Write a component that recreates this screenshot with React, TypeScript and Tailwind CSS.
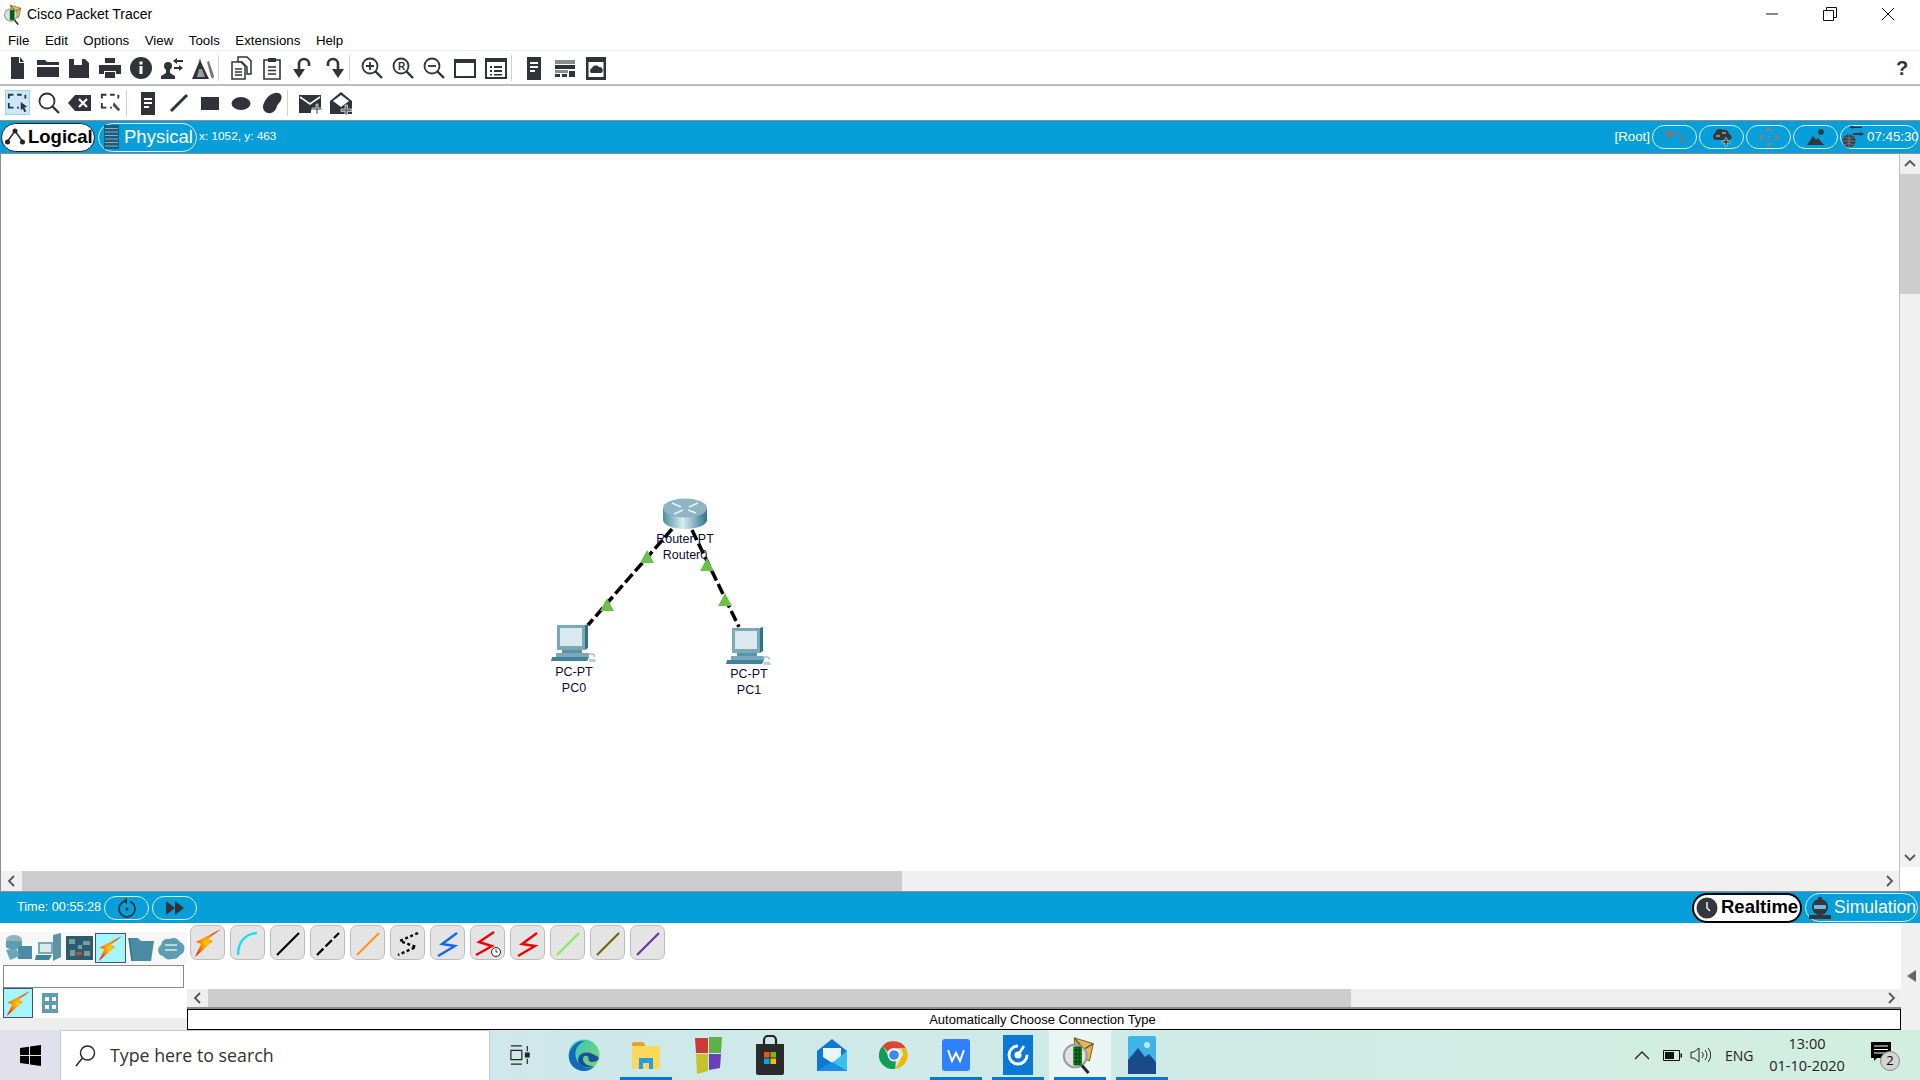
import type { ReactNode } from "react"

const ink = "#30333a"

function Tool({ children, selected }: { children: ReactNode; selected?: boolean }) {
  return (
    <div className="flex h-full w-[31px] items-center justify-center">
      <div className={`flex h-[25px] w-[25px] items-center justify-center ${selected ? "bg-[#cce8ff] border border-[#99d1ff]" : ""}`}>
        {children}
      </div>
    </div>
  )
}

function Ico({ children, size = 24 }: { children: ReactNode; size?: number }) {
  return (
    <svg width={size} height={size} viewBox="0 0 24 24" fill={ink} stroke="none">
      {children}
    </svg>
  )
}

function Sep({ w }: { w: string }) {
  return (
    <div className={`flex h-full items-center justify-start ${w}`}>
      <div className="h-[26px] w-px bg-[#d0d0d0]" />
    </div>
  )
}

function Magnifier({ children }: { children?: ReactNode }) {
  return (
    <Ico>
      <circle cx="10" cy="10" r="7.5" fill="none" stroke={ink} strokeWidth="1.8" />
      <path d="M15.5 15.5 22 22" stroke={ink} strokeWidth="2.4" />
      {children}
    </Ico>
  )
}

function TopToolbar() {
  return (
    <div className="flex h-[34px] items-center border-t border-[#eeeeee] pl-[1px]">
      <Tool><Ico><path d="M6 1h8v6h5v16H6z" /><path d="M15 1l4 5h-4z" /></Ico></Tool>
      <Tool><Ico><path d="M1 4h8l2 2h12v3H1z" /><path d="M1 11h22v10H1z" /></Ico></Tool>
      <Tool><Ico><path d="M2 3h16l4 4v15H2z" /><path d="M7 3h8v6H7z" fill="#fff" /></Ico></Tool>
      <Tool><Ico><path d="M7 2h10v5H7z" /><path d="M1 9h22v9h-5v-3H6v3H1z" /><path d="M7 16h10v6H7z" /></Ico></Tool>
      <Tool><Ico><circle cx="12" cy="12" r="11" /><path d="M10.5 10h3v8h-3zM10.5 5.5h3v3h-3z" fill="#fff" /></Ico></Tool>
      <Tool><Ico><circle cx="8" cy="10" r="4" /><path d="M6 13h4v4l5 3v3H1v-3l5-3z" /><path d="M13 5l4-3v2h6v2h-6v2zM23 12l-4-3v2h-5v2h5v2z" /></Ico></Tool>
      <Tool><Ico><path d="M9 2l1 4 8 17H1L8 6z" /><path d="M8 13h3l3 8H6z" fill="#9a9ca0" /><path d="M16 6l2-1 5 15-1 3-2-2z" fill="#777" /></Ico></Tool>
      <Sep w="w-[7px]" />
      <Tool><Ico><path d="M9 1h9l4 4v13h-4v-7l-5-5H9z" fill="none" stroke={ink} strokeWidth="1.5" /><path d="M3 6h9l4 4v13H3z" fill="#fff" stroke={ink} strokeWidth="1.5" /><path d="M6 13h7M6 16h7M6 19h7" stroke={ink} strokeWidth="1.3" /></Ico></Tool>
      <Tool><Ico><path d="M4 4h16v19H4z" fill="#fff" stroke={ink} strokeWidth="1.6" /><path d="M8 2h8v4H8z" /><path d="M8 11h8M8 14.5h8M8 18h8" stroke={ink} strokeWidth="1.4" /></Ico></Tool>
      <Tool><Ico><path d="M8 14V8a5 5 0 0 1 10 0v2" fill="none" stroke={ink} strokeWidth="2.6" /><path d="M2 13h12l-6 9z" /></Ico></Tool>
      <Tool><Ico><path d="M16 14V8a5 5 0 0 0-10 0v2" fill="none" stroke={ink} strokeWidth="2.6" /><path d="M10 13h12l-6 9z" /></Ico></Tool>
      <Sep w="w-[7px]" />
      <Tool><Magnifier><path d="M6 10h8M10 6v8" stroke={ink} strokeWidth="1.8" /></Magnifier></Tool>
      <Tool><Magnifier><text x="7" y="13.5" fontSize="10" fontWeight="700" fontFamily="Liberation Sans" fill={ink}>R</text></Magnifier></Tool>
      <Tool><Magnifier><path d="M6 10h8" stroke={ink} strokeWidth="1.8" /></Magnifier></Tool>
      <Tool><Ico><path d="M2 4h20v17H2z" fill="none" stroke={ink} strokeWidth="2" /><path d="M2 4h20v3H2z" /></Ico></Tool>
      <Tool><Ico><path d="M2 3h20v19H2z" fill="none" stroke={ink} strokeWidth="2" /><path d="M2 3h20v3H2z" /><path d="M6 10h2v2H6zM6 14h2v2H6zM10 10h8v2h-8zM10 14h8v2h-8zM6 18h2v1.5H6zM10 18h8v1.5h-8z" /></Ico></Tool>
      <Sep w="w-[7px]" />
      <Tool><Ico><path d="M5 1h14v23H5z" /><path d="M8 6h8v2H8zM8 10h8v2H8zM8 14h5v2H8z" fill="#fff" /></Ico></Tool>
      <Tool><Ico><path d="M2 4h20v4H2z" fill="#8a8d90" /><path d="M2 9h20v4H2z" fill={ink} /><path d="M2 14h13v3H2z" fill="#8a8d90" /><path d="M2 18h5v3H2zM9 18h5v3H9zM16 15h6v6h-6z" fill={ink} /></Ico></Tool>
      <Tool><Ico><path d="M2 1h20v23H2z" /><path d="M4.5 6h15v15h-15z" fill="#fff" /><path d="M7 17a3 3 0 0 1 1-5 4 4 0 0 1 7-1 3.2 3.2 0 0 1 2 6z" /></Ico></Tool>
      <div className="flex-1" />
      <div className="mr-[8px] flex w-[20px] items-center justify-center font-['Liberation_Sans',sans-serif] text-[20px] font-bold text-[#30333a]">?</div>
    </div>
  )
}

function LowerToolbar() {
  return (
    <div className="flex h-[36px] items-center border-t-2 border-[#bdbdbd] pb-[1px] pl-[2px]">
      <Tool selected><Ico size={22}><path d="M2 7V3h5M11 3h5M20 3v4M2 12v5h5M11 17h2" fill="none" stroke={ink} strokeWidth="2" /><path d="M15 11l7 5-3 1 2 4-2 1-2-4-2 2z" /></Ico></Tool>
      <Tool><Magnifier /></Tool>
      <Tool><Ico><path d="M7 4h16v16H7l-7-8z" /><path d="M11 8l8 8M19 8l-8 8" stroke="#fff" strokeWidth="2.2" /></Ico></Tool>
      <Tool><Ico size={22}><path d="M2 7V3h5M11 3h5M20 3v4M2 12v5h5M11 17h2" fill="none" stroke={ink} strokeWidth="2" /><path d="M15 11l7 8-2 2-6-6z" fill="#4d5056" /></Ico></Tool>
      <Sep w="w-[6px]" />
      <Tool><Ico><path d="M5 1h14v23H5z" /><path d="M8 7h8v2H8zM8 11h8v2H8zM8 15h5v2H8z" fill="#fff" /></Ico></Tool>
      <Tool><Ico><path d="M4 20 20 4" stroke={ink} strokeWidth="3" /></Ico></Tool>
      <Tool><Ico><path d="M3 6h18v13H3z" /></Ico></Tool>
      <Tool><Ico><ellipse cx="12" cy="12.5" rx="9.5" ry="6.5" /></Ico></Tool>
      <Tool><Ico><path d="M15 2c5-1 8 3 6 7-1 3-3 3-4 6-1 4-4 8-9 7-5-1-6-6-4-10 2-5 6-9 11-10z" /></Ico></Tool>
      <Sep w="w-[7px]" />
      <Tool><Ico><path d="M1 4h22v15H13v3H1z" /><path d="M2 6l10 7 10-7" fill="none" stroke="#fff" strokeWidth="1.6" /><path d="M18 13h2v4h4v2h-4v4h-2v-4h-4v-2h4z" fill="#6f7276" stroke="#fff" strokeWidth="0.6" /></Ico></Tool>
      <Tool><Ico><path d="M1 10 12 1l11 9v13H1z" /><path d="M4 10l8-6 8 6-8 6z" fill="#fff" /><path d="M16 14h2.500v4H23v2.500h-4.500V24H16v-3.500h-4V18h4z" fill="#6f7276" stroke="#fff" strokeWidth="0.6" /></Ico></Tool>
    </div>
  )
}

function Pill({ children, className = "" }: { children?: ReactNode; className?: string }) {
  return (
    <div className={`flex h-[24px] w-[45px] items-center justify-center rounded-full border border-[#d8f0fa] ${className}`}>
      {children}
    </div>
  )
}

function TopBlueBar() {
  return (
    <div className="flex h-[33px] items-center border-t border-[#8d8d8d] bg-[#069fd9] font-['Liberation_Sans',sans-serif] text-white">
      <div className="ml-px flex h-[29px] w-[94px] items-center gap-[2px] rounded-full border border-[#1d1d1d] bg-white pl-[2px] text-[18.5px] font-bold text-black">
        <svg width="22" height="22" viewBox="0 0 22 22">
          <path d="M3 16 11 5l8 11" fill="none" stroke="#222" strokeWidth="1.4" />
          <circle cx="3.500" cy="16" r="2.500" fill="#222" />
          <circle cx="11" cy="5" r="2.500" fill="#222" />
          <circle cx="18.500" cy="16" r="2.500" fill="#222" />
        </svg>
        <span className="leading-none">Logical</span>
      </div>
      <div className="ml-[3px] flex h-[29px] w-[99px] items-center gap-[5px] rounded-full border border-[#d8f0fa] pl-[5px] text-[18.5px]">
        <svg width="15" height="24" viewBox="0 0 15 24">
          <path d="M0 0h15v24H0z" fill="#1f5a78" />
          <path d="M1 3.500h13M1 7h13M1 10.500h13M1 14h13M1 17.500h13M1 21h13" stroke="#7fb0c8" strokeWidth="1" />
        </svg>
        <span className="leading-none">Physical</span>
      </div>
      <span className="ml-[2px] text-[11.8px]">x: 1052, y: 463</span>
      <div className="flex-1" />
      <span className="mr-[2px] text-[13.3px]">[Root]</span>
      <div className="mr-[2px] flex gap-[2px]">
        <Pill>
          <svg width="22" height="16" viewBox="0 0 22 16"><path d="M5 5h9a5 5 0 0 1 5 5v5" fill="none" stroke="#77797c" strokeWidth="2.200" /><path d="M0 5l7-5v10z" fill="#77797c" /></svg>
        </Pill>
        <Pill>
          <svg width="22" height="20" viewBox="0 0 22 20"><path d="M4 13a4 4 0 0 1 0-7 5 5 0 0 1 8-3 4.500 4.500 0 0 1 6 4 3 3 0 0 1-1 6z" fill="#33363b" /><path d="M5 8h4v2H5zM11 5h4v2h-4z" fill="#8a8d90" /><path d="M14 11h2v3h3v2h-3v3h-2v-3h-3v-2h3z" fill="#33363b" stroke="#fff" strokeWidth="0.5" /></svg>
        </Pill>
        <Pill>
          <svg width="22" height="22" viewBox="0 0 22 22" fill="#6f8694"><path d="M11 0l4 5H7zM11 22l-4-5h8zM0 11l5-4v8zM22 11l-5 4V7z" /><circle cx="11" cy="11" r="1.500" /></svg>
        </Pill>
        <Pill>
          <svg width="20" height="18" viewBox="0 0 20 18" fill="#33363b"><circle cx="15" cy="4" r="2.800" /><path d="M1 17l6-9 3 4 2-2 6 7z" /></svg>
        </Pill>
        <Pill className="!w-[78px] justify-start gap-[2px]">
          <svg width="24" height="24" viewBox="0 0 24 24" className="shrink-0">
            <circle cx="8" cy="16" r="6.500" fill="#3a4046" />
            <path d="M2 16h12M8 10v12M4 12c3 2 5 2 8 0M4 20c3-2 5-2 8 0" stroke="#7f8a90" strokeWidth="0.800" fill="none" />
            <path d="M8 2l4-1.500V1.500h9v1.500h-9v1zM23 9l-4-2v1h-7v2h7v1z" fill="#30333a" />
          </svg>
          <span className="text-[13.3px]">07:45:30</span>
        </Pill>
      </div>
    </div>
  )
}

function RouterIcon() {
  return (
    <svg width="46" height="32" viewBox="0 0 46 32">
      <defs>
        <linearGradient id="rside" x1="0" x2="1" y1="0" y2="0">
          <stop offset="0" stopColor="#4f8aa0" />
          <stop offset="0.45" stopColor="#d6ecf2" />
          <stop offset="1" stopColor="#2f7389" />
        </linearGradient>
      </defs>
      <path d="M1 10v12c0 5 10 9 22 9s22-4 22-9V10z" fill="url(#rside)" />
      <ellipse cx="23" cy="10" rx="22" ry="9.500" fill="#8fb5c4" />
      <path d="M10 5l9 4M36 5l-9 4M12 16l9-4M34 15l-8-3" stroke="#e8f3f6" strokeWidth="1.800" />
    </svg>
  )
}

function PcIcon() {
  return (
    <svg width="46" height="42" viewBox="0 0 46 42">
      <path d="M6 1h28v25H6z" fill="#7aa8b9" />
      <path d="M34 1l3-1v24l-3 2z" fill="#2f7389" />
      <path d="M9 4h22v18H9z" fill="#d9e9ef" />
      <path d="M11 26h20v3H11z" fill="#5c93a7" />
      <path d="M5 29h33v4H5z" fill="#7aa8b9" />
      <path d="M1 33h37l-2 4H0z" fill="#3f8299" />
      <path d="M37 31c4-2 7-1 6 2" fill="none" stroke="#9ab9c5" strokeWidth="1.200" />
      <path d="M37 35h7l1 3h-7z" fill="#b7cfd8" />
    </svg>
  )
}

function NodeLabel({ type, name }: { type: string; name: string }) {
  return (
    <div className="text-center font-['Liberation_Sans',sans-serif] text-[12.5px] leading-[16px] text-[#0a0a3c]">
      <div>{type}</div>
      <div>{name}</div>
    </div>
  )
}

function Canvas() {
  return (
    <div className="relative flex-1 bg-white">
      <svg className="absolute left-0 top-0" width="900" height="560">
        <path d="M671 375 587 471" stroke="#000" strokeWidth="3.500" strokeDasharray="11 4" />
        <path d="M691 376 738 473" stroke="#000" strokeWidth="3.500" strokeDasharray="11 4" />
        <path d="M646 396l7 13h-14z M606 444l7 13h-14z M706 404l7 13h-14z M724 439l7 13h-14z" fill="#6cc04a" />
      </svg>
      <div className="absolute left-[661px] top-[344px]"><RouterIcon /></div>
      <div className="absolute left-[644px] top-[377px] w-[80px]"><NodeLabel type="Router-PT" name="Router0" /></div>
      <div className="absolute left-[550px] top-[470px]"><PcIcon /></div>
      <div className="absolute left-[533px] top-[510px] w-[80px]"><NodeLabel type="PC-PT" name="PC0" /></div>
      <div className="absolute left-[725px] top-[473px]"><PcIcon /></div>
      <div className="absolute left-[708px] top-[512px] w-[80px]"><NodeLabel type="PC-PT" name="PC1" /></div>
    </div>
  )
}

function Chevron({ dir, className = "" }: { dir: "l" | "r" | "u" | "d"; className?: string }) {
  const d = { l: "M8 1 3 6l5 5", r: "M4 1l5 5-5 5", u: "M1 8l5-5 5 5", d: "M1 4l5 5 5-5" }[dir]
  return (
    <svg width="12" height="12" viewBox="0 0 12 12" className={className}>
      <path d={d} fill="none" stroke="#555" strokeWidth="1.800" />
    </svg>
  )
}

function Workspace() {
  return (
    <div className="flex h-[738px] border-t border-[#8d8d8d]">
      <div className="flex flex-1 flex-col border-l border-[#8d8d8d]">
        <Canvas />
        <div className="flex h-[20px] items-center bg-[#f0f0f0]">
          <div className="flex w-[21px] justify-center"><Chevron dir="l" /></div>
          <div className="h-full w-[880px] bg-[#cdcdcd]" />
          <div className="flex-1" />
          <div className="flex w-[21px] justify-center"><Chevron dir="r" /></div>
        </div>
      </div>
      <div className="flex w-[21px] flex-col bg-[#f0f0f0] border-l border-[#c0c0c0]">
        <div className="flex h-[20px] items-center justify-center"><Chevron dir="u" /></div>
        <div className="h-[120px] bg-[#cdcdcd]" />
        <div className="flex-1" />
        <div className="flex h-[21px] items-center justify-center"><Chevron dir="d" /></div>
        <div className="h-[24px] bg-white" />
      </div>
    </div>
  )
}

function BottomBlueBar() {
  return (
    <div className="flex h-[32px] items-center border-t border-[#8d8d8d] bg-[#069fd9] font-['Liberation_Sans',sans-serif] text-white">
      <span className="ml-[17px] text-[12.7px]">Time: 00:55:28</span>
      <Pill className="ml-[3px]">
        <svg width="20" height="20" viewBox="0 0 20 20"><path d="M7 3.500a8 8 0 1 0 6 0" fill="none" stroke="#30333a" strokeWidth="1.500" /><path d="M10 0v6L6 3z" fill="#30333a" /><circle cx="10" cy="11" r="1.500" fill="#30333a" /></svg>
      </Pill>
      <Pill className="ml-[3px]">
        <svg width="18" height="14" viewBox="0 0 18 14" fill="#30333a"><path d="M0 0l9 7-9 7zM9 0l9 7-9 7z" /></svg>
      </Pill>
      <div className="flex-1" />
      <div className="flex h-[30px] w-[110px] items-center gap-[3px] rounded-full border-2 border-black bg-white pl-[2px] text-[18.5px] font-bold text-black">
        <svg width="22" height="22" viewBox="0 0 22 22"><circle cx="11" cy="11" r="10.500" fill="#33363b" /><path d="M11 5v6l3 3" fill="none" stroke="#fff" strokeWidth="1.400" /></svg>
        <span className="leading-none">Realtime</span>
      </div>
      <div className="ml-[3px] mr-[2px] flex h-[29px] w-[113px] items-center gap-[3px] rounded-full border border-[#d8f0fa] pl-[3px] text-[17.6px]">
        <svg width="22" height="22" viewBox="0 0 22 22" className="shrink-0"><path d="M9 0h4v3H9z" fill="#33363b" /><circle cx="11" cy="10" r="8" fill="#33363b" /><path d="M5 8h12v4H5z" fill="#6fb9d8" /><path d="M0 18h22v4H0z" fill="#33363b" /></svg>
        <span className="leading-none">Simulation</span>
      </div>
    </div>
  )
}

function Bolt({ size = 30 }: { size?: number }) {
  return (
    <svg width={size} height={size} viewBox="0 0 30 30">
      <defs>
        <radialGradient id="boltfill" cx="0.45" cy="0.5" r="0.55">
          <stop offset="0" stopColor="#ffd400" />
          <stop offset="0.45" stopColor="#ff8a00" />
          <stop offset="1" stopColor="#ee1c00" />
        </radialGradient>
      </defs>
      <path d="M28 1 15 11l5 2L2 29l6-13-5-2z" fill="url(#boltfill)" />
    </svg>
  )
}

function DevicePanel() {
  return (
    <div className="flex w-[187px] flex-col bg-white">
      <div className="h-[9px]" />
      <div className="flex h-[33px] items-center bg-[#f7f7f7] pb-[1px] pl-[2px]">
        <div className="flex w-[31px] justify-center">
          <svg width="28" height="28" viewBox="0 0 28 28"><ellipse cx="10" cy="6" rx="8" ry="5" fill="#8fb5c4" /><path d="M2 7v6c2 3 13 3 16 0V7z" fill="#5f9db2" /><path d="M14 12h14v13H14z" fill="#4a8ca3" /><path d="M2 16l10-2 4 8-10 4z" fill="#6ba7bb" /></svg>
        </div>
        <div className="flex w-[31px] justify-center">
          <svg width="28" height="30" viewBox="0 0 28 30"><path d="M18 2l8-2v24l-8 4z" fill="#5c93a7" /><path d="M3 9h15v12H3z" fill="#7aa8b9" /><path d="M5 11h11v8H5z" fill="#d9e9ef" /><path d="M1 22h16l-3 5H0z" fill="#3f8299" /></svg>
        </div>
        <div className="flex w-[31px] justify-center">
          <svg width="27" height="24" viewBox="0 0 27 24"><path d="M0 0h27v24H0z" fill="#2c5d6d" /><path d="M3 3h6v5H3zM17 5h7v4h-7zM4 14h5v6H4zM12 9h4v4h-4zM18 15h6v5h-6z" fill="#7d9aa6" /><path d="M10 16h6v3h-6z" fill="#c24a3a" /></svg>
        </div>
        <div className="flex h-[30px] w-[31px] items-center justify-center border border-[#456] bg-[#a5f5ff]"><Bolt size={27} /></div>
        <div className="flex w-[30px] justify-center">
          <svg width="28" height="26" viewBox="0 0 28 26"><path d="M2 3h9l3 3h13l-3 20H5z" fill="#4a8ca3" /><path d="M2 3l3 23" stroke="#2f7389" strokeWidth="1.500" /></svg>
        </div>
        <div className="flex w-[30px] justify-center">
          <svg width="28" height="24" viewBox="0 0 28 24"><path d="M6 20a6 6 0 0 1-2-11 7 7 0 0 1 9-6 7 7 0 0 1 10 3 7 7 0 0 1 0 13 8 8 0 0 1-8 4 8 8 0 0 1-9-3z" fill="#5f9db2" /><path d="M8 9h12M8 14h12" stroke="#bcd6df" strokeWidth="2" /></svg>
        </div>
      </div>
      <div className="mx-[3px] h-[23px] border border-[#8a8a8a] bg-white" />
      <div className="flex h-[30px] items-center gap-[1px] bg-white pl-[3px]">
        <div className="flex h-[30px] w-[30px] items-center justify-center border border-[#456] bg-[#a5f5ff]"><Bolt size={27} /></div>
        <svg width="30" height="24" viewBox="0 0 30 24"><path d="M8 2h16v20H8z" fill="#5f9db2" /><path d="M11 6h4v4h-4zM18 6h4v4h-4zM11 14h4v4h-4zM18 14h4v4h-4z" fill="#fff" /></svg>
      </div>
      <div className="flex-1 bg-[#eeeeee]" />
    </div>
  )
}

const cables: ReactNode[] = [
  <Bolt size={30} />,
  <path d="M6 28C6 16 12 7 25 6" fill="none" stroke="#19dcef" strokeWidth="2.400" />,
  <path d="M5 28 27 6" stroke="#000" strokeWidth="2.200" />,
  <path d="M5 28 27 6" stroke="#000" strokeWidth="2.200" strokeDasharray="9 3" />,
  <path d="M5 28 27 6" stroke="#f7991c" strokeWidth="2.200" />,
  <path d="M26 6 8 14l16 6L6 28" fill="none" stroke="#000" strokeWidth="2.400" strokeDasharray="3 2.500" />,
  <path d="M25 6 10 17l13 2L6 29" fill="none" stroke="#1266f1" strokeWidth="2.400" />,
  <g><path d="M22 5 7 15l13 4L4 28" fill="none" stroke="#f00000" strokeWidth="2.400" /><circle cx="24" cy="25" r="4.500" fill="#fff" stroke="#222" strokeWidth="1" /><path d="M24 22v3h2" fill="none" stroke="#222" strokeWidth="0.800" /></g>,
  <path d="M25 6 10 17l13 2L6 29" fill="none" stroke="#f00000" strokeWidth="2.400" />,
  <path d="M5 28 27 6" stroke="#7df04a" strokeWidth="2.200" />,
  <path d="M5 28 27 6" stroke="#6d6410" strokeWidth="2.200" />,
  <path d="M5 28 27 6" stroke="#6a329f" strokeWidth="2.200" />,
]

function CablePanel() {
  return (
    <div className="flex flex-1 flex-col">
      <div className="flex h-[66px] gap-[5px] bg-white pl-[3px] pt-[2px]">
        {cables.map((c, i) => (
          <div key={i} className="flex h-[35px] w-[35px] items-center justify-center rounded-[7px] border border-[#bcbcbc] bg-[#e4e4e4]">
            {i === 0 ? c : <svg width="32" height="32" viewBox="0 0 32 32">{c}</svg>}
          </div>
        ))}
      </div>
      <div className="flex h-[20px] items-center border-b-2 border-[#8d8d8d] bg-[#efefef]">
        <div className="flex w-[21px] justify-center"><Chevron dir="l" /></div>
        <div className="h-full w-[1143px] bg-[#cdcdcd]" />
        <div className="flex-1" />
        <div className="flex w-[21px] justify-center"><Chevron dir="r" /></div>
      </div>
      <div className="flex h-[21px] items-center justify-center border border-black bg-white pr-[3px] font-['Liberation_Sans',sans-serif] text-[13px] text-black">
        Automatically Choose Connection Type
      </div>
    </div>
  )
}

function TaskIcon({ children, active, hover }: { children: ReactNode; active?: boolean; hover?: boolean }) {
  return (
    <div className={`relative flex h-full w-[62px] items-center justify-center ${hover ? "bg-[#eaf6f3]" : ""}`}>
      {children}
      {active ? <div className="absolute bottom-0 left-[5px] right-[5px] h-[3px] bg-[#0078d4]" /> : null}
    </div>
  )
}

function PtLogo({ size }: { size: number }) {
  return (
    <svg width={size} height={size} viewBox="0 0 40 40">
      <path d="M14 2 34 8l-4 18-14-4z" fill="#e2b85a" stroke="#6b5420" strokeWidth="1" />
      <path d="M14 2l10 12 10-6" fill="none" stroke="#6b5420" strokeWidth="1.500" />
      <circle cx="15" cy="21" r="12" fill="#dfe3e3" stroke="#9a9a9a" strokeWidth="2" />
      <path d="M13 11h9v20h-9z" fill="#0f7a1f" />
      <path d="M13 15h9M13 19h9M13 23h9M13 27h9M16 11v20M19 11v20" stroke="#042f0a" strokeWidth="0.800" />
      <path d="M22 31l7 8" stroke="#222" strokeWidth="3" />
    </svg>
  )
}

function Taskbar() {
  return (
    <div className="flex h-[50px] items-center bg-[linear-gradient(90deg,#e3e0ee_0%,#cde8ea_30%,#d2eee0_100%)]">
      <div className="flex h-full w-[60px] items-center justify-center">
        <svg width="21" height="21" viewBox="0 0 21 21" fill="#000"><path d="M0 3l9-1.300V10H0zM10 1.500 21 0v10H10zM0 11h9v8.300L0 18zM10 11h11v10l-11-1.500z" /></svg>
      </div>
      <div className="flex h-full w-[430px] items-center gap-[14px] border-x border-t border-[#c9c9c9] bg-white pl-[14px] font-['Open_Sans',sans-serif] text-[17.8px] text-[#333]">
        <svg width="21" height="24" viewBox="0 0 21 24"><circle cx="12.500" cy="9" r="7" fill="none" stroke="#222" strokeWidth="1.400" /><path d="M7.500 14 1 22" stroke="#222" strokeWidth="1.400" /></svg>
        <span>Type here to search</span>
      </div>
      <div className="flex h-full w-[63px] items-center justify-center pr-[4px]">
        <svg width="20" height="22" viewBox="0 0 22 22" fill="none" stroke="#222" strokeWidth="1.300"><path d="M1 1h12M1 21h12M1 6h12v10H1zM19 1v6M19 15v6" /><path d="M17 9h4v4h-4z" fill="#222" /></svg>
      </div>
      <TaskIcon>
        <svg width="32" height="34" viewBox="0 0 32 34">
          <defs>
            <linearGradient id="edgea" x1="0" x2="1" y1="0" y2="1"><stop offset="0" stopColor="#36c2c9" /><stop offset="1" stopColor="#7bdc5e" /></linearGradient>
          </defs>
          <circle cx="16" cy="17" r="15.500" fill="url(#edgea)" />
          <path d="M1 17C2 8 10 2 17 3c-8 3-11 10-9 17 2 8 11 12 19 8-3 3-7 5-11 5C7 33 0 26 1 17z" fill="#0f6cbd" />
          <path d="M10 22c0-6 6-9 12-7 4 1 7 3 9 5-1 3-4 4-8 4-4-1-1-5-4-6-4-1-5 3-3 6 2 3 5 4 9 4-6 3-15 0-15-6z" fill="#1b4f9e" />
        </svg>
      </TaskIcon>
      <TaskIcon active>
        <svg width="30" height="28" viewBox="0 0 30 28"><path d="M1 3a2 2 0 0 1 2-2h9l3 4H1z" fill="#e0a52a" /><path d="M1 5h28v21a2 2 0 0 1-2 2H3a2 2 0 0 1-2-2z" fill="#fbd85a" /><path d="M8 17h14v11h-4v-6h-6v6H8z" fill="#2b9bdf" /></svg>
      </TaskIcon>
      <TaskIcon>
        <svg width="30" height="38" viewBox="0 0 30 38"><path d="M2 2h13v15H3z" fill="#cb3a34" /><path d="M16 1h13l-1 16H16z" fill="#5cb343" /><path d="M3 18h12v17L4 38z" fill="#c5c22c" /><path d="M16 18h12l-1 14-11 2z" fill="#6a3fb8" /></svg>
      </TaskIcon>
      <TaskIcon>
        <svg width="30" height="40" viewBox="0 0 30 40"><path d="M9 9V5a4 4 0 0 1 4-4h4a4 4 0 0 1 4 4v4" fill="none" stroke="#222" strokeWidth="2.200" /><path d="M1 9h28v29a2 2 0 0 1-2 2H3a2 2 0 0 1-2-2z" fill="#2b2b2b" /><path d="M9 17h5.500v5.500H9z" fill="#f25022" /><path d="M15.500 17H21v5.500h-5.500z" fill="#7fba00" /><path d="M9 23.500h5.500V29H9z" fill="#00a4ef" /><path d="M15.500 23.500H21V29h-5.500z" fill="#ffb900" /></svg>
      </TaskIcon>
      <TaskIcon>
        <svg width="30" height="32" viewBox="0 0 30 32"><path d="M15 0 30 12v20H0V12z" fill="#0f78d4" /><path d="M6 9h18v9l-9 6-9-6z" fill="#eaf6fd" /><path d="M30 12v20L15 24z" fill="#38c0f2" /><path d="M0 32h30L15 23z" fill="#1a8fe3" /></svg>
      </TaskIcon>
      <TaskIcon>
        <svg width="30" height="30" viewBox="0 0 48 48"><path d="M24 2a22 22 0 0 1 19 11H24a11 11 0 0 0-10 6L6 9A22 22 0 0 1 24 2z" fill="#db4437" /><path d="M43 13a22 22 0 0 1-17 33l9-16a11 11 0 0 0-1-17z" fill="#f4b400" /><path d="M26 46A22 22 0 0 1 6 9l9 16a11 11 0 0 0 12 7z" fill="#0f9d58" /><circle cx="24" cy="24" r="9" fill="#4285f4" stroke="#fff" strokeWidth="2.500" /></svg>
      </TaskIcon>
      <TaskIcon active>
        <svg width="28" height="32" viewBox="0 0 28 32"><rect width="28" height="32" rx="3" fill="#2f80ff" /><path d="M6 11l4 11 4-8 4 8 4-11" fill="none" stroke="#fff" strokeWidth="2" /></svg>
      </TaskIcon>
      <TaskIcon active>
        <svg width="30" height="40" viewBox="0 0 30 40"><path d="M0 0h30v40H0z" fill="#0a78d4" /><circle cx="15" cy="20" r="9" fill="none" stroke="#fff" strokeWidth="3" strokeDasharray="42 14" /><circle cx="15" cy="20" r="3.500" fill="#fff" /><path d="M15 20l6-9" stroke="#fff" strokeWidth="2.500" /></svg>
      </TaskIcon>
      <TaskIcon active hover><PtLogo size={38} /></TaskIcon>
      <TaskIcon active>
        <svg width="28" height="38" viewBox="0 0 28 38"><rect width="28" height="38" rx="2" fill="#3eb4ea" /><circle cx="19" cy="9" r="3" fill="#bfe9fa" /><path d="M0 38V24L10 12l7 9 4-3 7 8v12z" fill="#1a4a8a" /></svg>
      </TaskIcon>
      <div className="flex-1" />
      <div className="flex items-center font-['Open_Sans',sans-serif] text-[#222]">
        <svg width="16" height="10" viewBox="0 0 16 10" className="mr-[13px]"><path d="M1 9l7-7 7 7" fill="none" stroke="#222" strokeWidth="1.300" /></svg>
        <svg width="19" height="11" viewBox="0 0 19 11" className="mr-[8px]"><path d="M.500.500h16v10H.500z" fill="none" stroke="#111" /><path d="M2 2h9v7H2z" fill="#111" /><path d="M17.500 3.500h1.500v4h-1.500z" fill="#111" /></svg>
        <svg width="21" height="16" viewBox="0 0 21 16" className="mr-[14px]"><path d="M1 5h3l5-4v14l-5-4H1z" fill="none" stroke="#222" /><path d="M12 5c1.500 2 1.500 4 0 6M15 3c2.500 3 2.500 7 0 10M18 1c3.500 4 3.500 10 0 14" fill="none" stroke="#222" /></svg>
        <span className="w-[38px] text-[14px]">ENG</span>
        <div className="ml-[2px] w-[84px] text-center text-[14.5px] leading-[22px]">
          <div>13:00</div>
          <div>01-10-2020</div>
        </div>
        <div className="relative ml-[22px] mr-[29px] h-[26px] w-[20px]">
          <svg width="20" height="20" viewBox="0 0 20 20"><path d="M0 0h20v16H6l-3 3v-3H0z" fill="#000" /><path d="M3 4h14M3 7.500h14M3 11h14" stroke="#fff" strokeWidth="1" /></svg>
          <div className="absolute left-[9px] top-[9px] flex h-[20px] w-[20px] items-center justify-center rounded-full border border-[#888] bg-[#d4d4d4] text-[13px] text-black">2</div>
        </div>
      </div>
    </div>
  )
}

export default function App() {
  return (
    <div className="flex h-[1080px] w-[1920px] flex-col overflow-hidden bg-white">
      <div className="flex h-[28px] items-center">
        <div className="ml-[3px] mr-[3px]"><PtLogo size={21} /></div>
        <span className="font-['Liberation_Sans',sans-serif] text-[14px] text-black">Cisco Packet Tracer</span>
        <div className="flex-1" />
        <div className="mr-[3px] flex">
          <div className="flex w-[58px] justify-center"><svg width="14" height="14" viewBox="0 0 14 14"><path d="M1 7h12" stroke="#111" /></svg></div>
          <div className="flex w-[58px] justify-center"><svg width="14" height="14" viewBox="0 0 14 14"><path d="M.500 3.500h10v10H.500zM3.500 3.500v-3h10v10h-3" fill="none" stroke="#111" /></svg></div>
          <div className="flex w-[58px] justify-center"><svg width="14" height="14" viewBox="0 0 14 14"><path d="M1 1l12 12M13 1 1 13" stroke="#111" /></svg></div>
        </div>
      </div>
      <div className="flex h-[22px] items-center gap-[15.5px] pl-2 pt-[3px] font-['Liberation_Sans',sans-serif] text-[13.3px] text-black">
        <span>File</span>
        <span>Edit</span>
        <span>Options</span>
        <span>View</span>
        <span>Tools</span>
        <span>Extensions</span>
        <span>Help</span>
      </div>
      <TopToolbar />
      <LowerToolbar />
      <TopBlueBar />
      <Workspace />
      <BottomBlueBar />
      <div className="flex h-[107px]">
        <DevicePanel />
        <CablePanel />
        <div className="flex w-[19px] items-center justify-center bg-[#f0f0f0] pb-[2px]">
          <svg width="10" height="12" viewBox="0 0 10 12"><path d="M10 0v12L1 6z" fill="#666" /></svg>
        </div>
      </div>
      <Taskbar />
    </div>
  )
}
